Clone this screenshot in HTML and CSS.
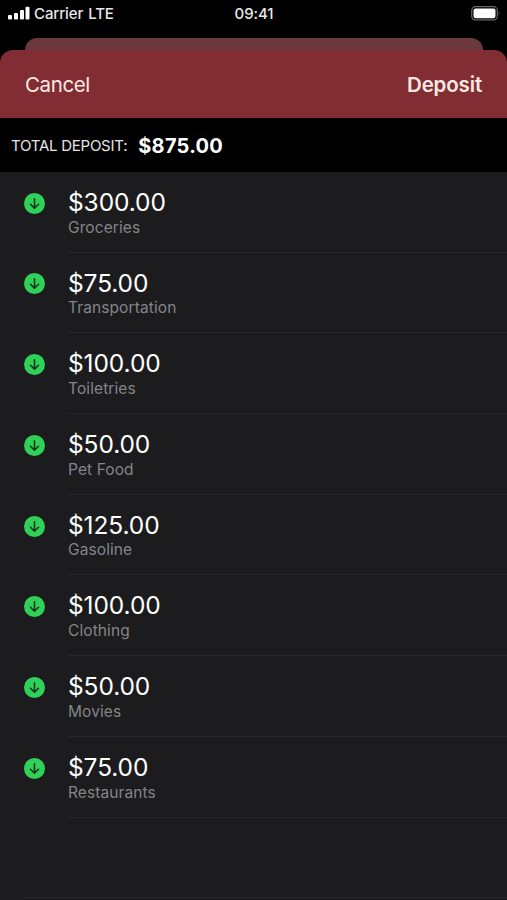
FILE: index.html
```html
<!DOCTYPE html>
<html lang="en">
<head>
  <meta charset="UTF-8">
  <meta name="viewport" content="width=device-width, initial-scale=1.0">
  <title>Deposit</title>
  <link rel="stylesheet" href="styles.css">
</head>
<body>
    <!-- Arrow icon shared by every row -->
    <svg class="sprite" width="0" height="0">
        <symbol id="arrow" viewBox="0 0 22 22">
            <circle cx="11" cy="11" r="11" fill="#30d158"/>
            <path d="M11 6v9.8M6.8 11.8l4.2 4.2 4.2-4.2" fill="none" stroke="#10391c" stroke-width="1.7" stroke-linecap="round" stroke-linejoin="round"/>
        </symbol>
    </svg>

    <div class="status-bar">
        <div class="carrier">
            <svg width="22" height="14" viewBox="0 0 22 14" fill="#fff">
                <rect x="0" y="9" width="4" height="4.5" rx="1"/>
                <rect x="6" y="7" width="4" height="6.5" rx="1"/>
                <rect x="12" y="4" width="4" height="9.5" rx="1"/>
                <rect x="17.5" y="0.8" width="4" height="12.7" rx="1"/>
            </svg>
            <span>Carrier</span>
            <span class="network">LTE</span>
        </div>
        <div class="time">09:41</div>
        <div class="battery">
            <svg width="30" height="15" viewBox="0 0 30 15">
                <rect x="0.7" y="0.7" width="25.6" height="13.2" rx="3.8" fill="none" stroke="#666" stroke-width="1.2"/>
                <rect x="2.5" y="2.4" width="22" height="9.8" rx="2.2" fill="#fff"/>
                <path d="M27.8 5.2q1.7 2 0 4.2z" fill="#777"/>
            </svg>
        </div>
    </div>

    <div class="back-sheet"></div>

    <div class="sheet">
        <header class="nav">
            <a class="cancel">Cancel</a>
            <a class="deposit">Deposit</a>
        </header>

        <div class="total">
            <span class="total-label">TOTAL DEPOSIT:</span>
            <span class="total-amount">$875.00</span>
        </div>

        <div class="list">
            <div class="row">
                <svg class="icon"><use href="#arrow"/></svg>
                <div class="details"><div class="amount">$300.00</div><div class="name">Groceries</div></div>
            </div>
            <div class="row">
                <svg class="icon"><use href="#arrow"/></svg>
                <div class="details"><div class="amount">$75.00</div><div class="name">Transportation</div></div>
            </div>
            <div class="row">
                <svg class="icon"><use href="#arrow"/></svg>
                <div class="details"><div class="amount">$100.00</div><div class="name">Toiletries</div></div>
            </div>
            <div class="row">
                <svg class="icon"><use href="#arrow"/></svg>
                <div class="details"><div class="amount">$50.00</div><div class="name">Pet Food</div></div>
            </div>
            <div class="row">
                <svg class="icon"><use href="#arrow"/></svg>
                <div class="details"><div class="amount">$125.00</div><div class="name">Gasoline</div></div>
            </div>
            <div class="row">
                <svg class="icon"><use href="#arrow"/></svg>
                <div class="details"><div class="amount">$100.00</div><div class="name">Clothing</div></div>
            </div>
            <div class="row">
                <svg class="icon"><use href="#arrow"/></svg>
                <div class="details"><div class="amount">$50.00</div><div class="name">Movies</div></div>
            </div>
            <div class="row">
                <svg class="icon"><use href="#arrow"/></svg>
                <div class="details"><div class="amount">$75.00</div><div class="name">Restaurants</div></div>
            </div>
            <div class="empty-row"></div>
        </div>
    </div>
</body>
</html>
```

FILE: styles.css
```css
:root {
    --bg: #1c1c1e;
    --accent: #812d33;
    --line: #28282a;
    --tint: #fde9e1;
}

* {
    box-sizing: border-box;
}

body {
    margin: 0;
    height: 900px;
    overflow: hidden;
    display: flex;
    flex-direction: column;
    background: #000;
    color: #fff;
    font-family: Inter, 'Liberation Sans', sans-serif;
}

.sprite {
    position: absolute;
}

/* Status bar */
.status-bar {
    display: grid;
    grid-template-columns: 1fr auto 1fr;
    align-items: center;
    height: 38px;
    padding: 0 7px 12px 8px;
    font-size: 15px;
    font-weight: 500;
    letter-spacing: -0.1px;
    color: #e8e8e8;
}

.carrier {
    display: flex;
    align-items: center;
    gap: 4px;
}

.network {
    margin-left: 1px;
}

.battery {
    display: flex;
    justify-content: flex-end;
    margin-right: -1px;
}

/* Sheets */
.back-sheet {
    height: 12px;
    margin: 0 24px 0 25px;
    background: #6b383d;
    border-radius: 12px 12px 0 0;
}

.sheet {
    flex: 1;
    display: flex;
    flex-direction: column;
}

.nav {
    display: flex;
    justify-content: space-between;
    align-items: center;
    height: 68px;
    padding: 0 25px;
    background: var(--accent);
    border-radius: 13px 13px 0 0;
    font-size: 20.5px;
    color: var(--tint);
}

.cancel {
    letter-spacing: -0.4px;
}

.deposit {
    font-weight: 600;
    letter-spacing: -0.15px;
}

.total {
    display: flex;
    align-items: center;
    gap: 11px;
    height: 54px;
    padding-left: 11px;
}

.total-label {
    font-size: 15px;
    letter-spacing: -0.25px;
    color: #e5e5e5;
}

.total-amount {
    padding-top: 1px;
    font-size: 20px;
    font-weight: 700;
    letter-spacing: 0.25px;
}

/* List */
.list {
    flex: 1;
    background: var(--bg);
}

.row {
    display: flex;
    height: 80.7px;
    padding-left: 24px;
}

.icon {
    width: 21px;
    height: 21px;
    margin: 20.8px 23px 0 0;
}

.details {
    flex: 1;
    padding-top: 16px;
    border-bottom: 1px solid var(--line);
}

.amount {
    margin-bottom: 0.7px;
    font-size: 24.5px;
    line-height: 29px;
    letter-spacing: -0.1px;
}

.name {
    font-size: 15.5px;
    line-height: 20px;
    letter-spacing: 0.1px;
    color: #848488;
}

.empty-row {
    height: 80px;
    margin-left: 24px;
    border-bottom: 1px solid var(--line);
}
```
